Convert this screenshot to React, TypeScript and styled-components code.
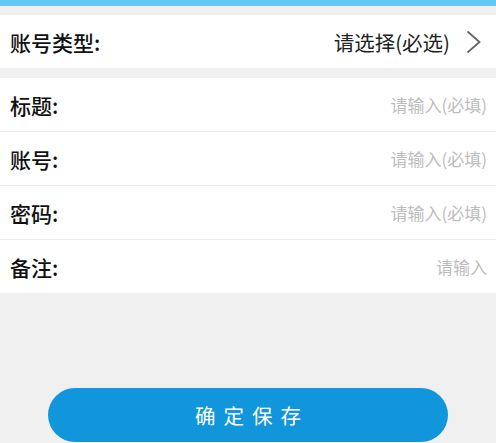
import React from "react";
import styled, { createGlobalStyle } from "styled-components";

const Global = createGlobalStyle`
  html, body { margin: 0; padding: 0; background: #f0f0f0; }
  body { font-family: "Noto Sans CJK SC", "Noto Sans", sans-serif; }
`;

const Page = styled.div`
  min-height: 443px;
  background: #f0f0f0;
  display: flex;
  flex-direction: column;
`;

const TopBar = styled.div`
  height: 6px;
  background: #64c7f6;
  margin-bottom: 9px;
`;

const Section = styled.div<{ $gap?: number }>`
  background: #fff;
  margin-bottom: ${(p) => p.$gap ?? 0}px;
`;

const Row = styled.div<{ $divider?: boolean }>`
  height: 53px;
  display: flex;
  align-items: center;
  justify-content: space-between;
  padding: 0 9px 0 10px;
  border-bottom: ${(p) => (p.$divider ? "1px solid #ececec" : "none")};
`;

const Label = styled.span`
  font-size: 21px;
  font-weight: 500;
  color: #111;
`;

const Placeholder = styled.span`
  font-size: 17px;
  color: #bdbdbd;
`;

const Select = styled.div`
  display: flex;
  align-items: center;
  gap: 16px;
  font-size: 20.5px;
  color: #222;
  padding-right: 6px;
`;

const Actions = styled.div`
  display: flex;
  justify-content: center;
  margin-top: 95px;
`;

const SaveButton = styled.button`
  width: 400px;
  height: 54px;
  border: none;
  border-radius: 27px;
  background: #1296db;
  color: #fff;
  font-family: "Noto Sans CJK SC", sans-serif;
  font-size: 20.5px;
  letter-spacing: 8px;
  padding-left: 14px;
  cursor: pointer;
`;

const Chevron = () => (
  <svg width="15" height="24" viewBox="0 0 15 24" fill="none">
    <path d="M1.5 1.5 L13.5 12 L1.5 22.5" stroke="#666" strokeWidth="1.8" />
  </svg>
);

const fields = [
  { label: "标题:", ph: "请输入(必填)" },
  { label: "账号:", ph: "请输入(必填)" },
  { label: "密码:", ph: "请输入(必填)" },
  { label: "备注:", ph: "请输入" },
];

export default function App() {
  return (
    <>
      <Global />
      <Page>
        <TopBar />
        <Section $gap={10}>
          <Row>
            <Label>账号类型:</Label>
            <Select>
              请选择(必选)
              <Chevron />
            </Select>
          </Row>
        </Section>
        <Section>
          {fields.map((f, i) => (
            <Row key={f.label} $divider={i < fields.length - 1}>
              <Label>{f.label}</Label>
              <Placeholder>{f.ph}</Placeholder>
            </Row>
          ))}
        </Section>
        <Actions>
          <SaveButton>确定保存</SaveButton>
        </Actions>
      </Page>
    </>
  );
}
